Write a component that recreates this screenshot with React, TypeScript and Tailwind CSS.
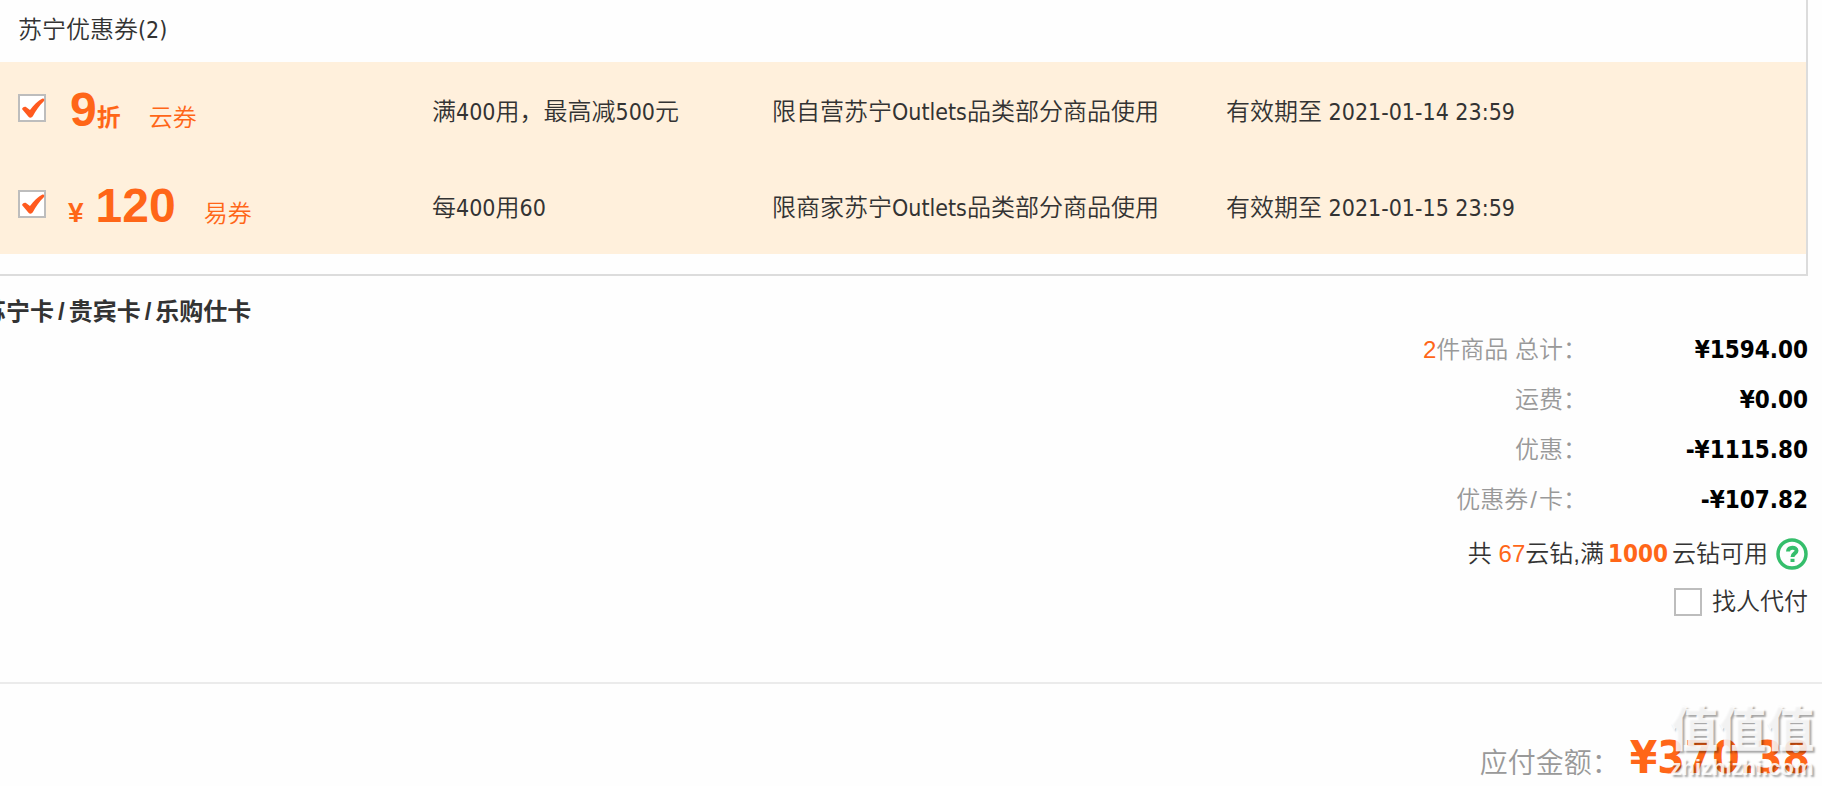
import React from 'react';

const coupons = [
  {
    id: 'yun',
    amount: '9',
    unit: '折',
    type: '云券',
    rule: '满400用，最高减500元',
    scope: '限自营苏宁Outlets品类部分商品使用',
    expires: '2021-01-14 23:59',
  },
  {
    id: 'yi',
    symbol: '¥',
    amount: '120',
    type: '易券',
    rule: '每400用60',
    scope: '限商家苏宁Outlets品类部分商品使用',
    expires: '2021-01-15 23:59',
  },
];

// Latin runs use a narrower face than the Chinese around them
function Mixed({ text }: { text: string }) {
  return (
    <>
      {text.split(/([ -~]+)/).map((part, i) =>
        i % 2 ? (
          <span key={i} className="font-['DejaVu_Sans_Condensed','Noto_Sans',sans-serif] text-[23px]">
            {part}
          </span>
        ) : (
          part
        )
      )}
    </>
  );
}

function Checkbox({ id, label, defaultChecked }: { id: string; label?: string; defaultChecked?: boolean }) {
  return (
    <span className="relative block h-7 w-7">
      <input
        id={id}
        type="checkbox"
        aria-label={label}
        defaultChecked={defaultChecked}
        className="peer block h-7 w-7 appearance-none border-2 border-[#bdbdbd] bg-white"
      />
      <svg viewBox="0 0 28 28" className="pointer-events-none absolute inset-0 hidden h-7 w-7 peer-checked:block">
        <path
          d="M4 15 C5 12.8 6.8 12.2 8.3 13.2 L12 16 C15.5 11 20 6.5 24.5 4.5 C26.3 4 26.8 5.8 25.8 7.3 C21 12 17.8 17 14.8 22.3 C13.7 24 11.7 24 10.5 22.8 Z"
          fill="#ff5a1f"
        />
      </svg>
    </span>
  );
}

function SummaryRow({ label, value }: { label: React.ReactNode; value: string }) {
  return (
    <div className="flex h-[50px] items-center justify-end">
      <dt className="font-[350] text-[#999]">{label}</dt>
      <dd className="w-[221px] text-right font-['DejaVu_Sans_Condensed','Noto_Sans',sans-serif] font-bold text-black">
        {value}
      </dd>
    </div>
  );
}

export default function App() {
  return (
    <div className="relative overflow-hidden bg-[#fefefe] font-['Liberation_Sans','Noto_Sans_CJK_SC',sans-serif] text-2xl text-[#333]">
      <section className="mr-3.5 border-r-2 border-b-2 border-[#dcdcdc] pb-5">
        <h2 className="flex h-[62px] items-center pb-0.5 pl-[18px] font-[350]">
          <span>
            <Mixed text="苏宁优惠券(2)" />
          </span>
        </h2>
        <table className="w-full table-fixed bg-[#fff0dc] text-left">
          <colgroup>
            <col className="w-[68px]" />
            <col className="w-[364px]" />
            <col className="w-[340px]" />
            <col className="w-[454px]" />
            <col />
          </colgroup>
          <tbody>
            {coupons.map((coupon) => (
              <tr key={coupon.id} className="h-24">
                <td className="pb-1 pl-[18px]">
                  <Checkbox id={coupon.id} label={coupon.type} defaultChecked />
                </td>
                <td className="whitespace-nowrap text-[#ff6618]">
                  <label htmlFor={coupon.id} className="flex items-baseline">
                    {coupon.symbol && <span className="mr-3 text-[28px] leading-8 font-bold">{coupon.symbol}</span>}
                    <strong className={coupon.symbol ? 'text-5xl' : 'ml-0.5 text-5xl'}>{coupon.amount}</strong>
                    {coupon.unit && <span className="font-bold">{coupon.unit}</span>}
                    <span className="ml-7 font-[350]">{coupon.type}</span>
                  </label>
                </td>
                <td className="pt-1 font-[350]">
                  <Mixed text={coupon.rule} />
                </td>
                <td className="pt-1 font-[350]">
                  <Mixed text={coupon.scope} />
                </td>
                <td className="pt-1 font-[350]">
                  <Mixed text={`有效期至 ${coupon.expires}`} />
                </td>
              </tr>
            ))}
          </tbody>
        </table>
      </section>

      <h3 className="-ml-[18px] mt-[18px] h-[31px] leading-9 font-bold">
        苏宁卡<span className="px-1">/</span>贵宾卡<span className="px-1">/</span>乐购仕卡
      </h3>

      <section className="pr-3.5">
        <dl>
          <SummaryRow
            label={
              <>
                <span className="text-[#ff6618]">2</span>件商品 总计：
              </>
            }
            value="¥1594.00"
          />
          <SummaryRow label="运费：" value="¥0.00" />
          <SummaryRow label="优惠：" value="-¥1115.80" />
          <SummaryRow
            label={
              <>
                优惠券<span className="px-0.5">/</span>卡：
              </>
            }
            value="-¥107.82"
          />
        </dl>

        <div className="mt-[11px] flex h-9 items-center justify-end font-[350]">
          <p>
            共 <span className="text-[#ff6618]">67</span>云钻,满
            <strong className="mx-1 font-['DejaVu_Sans_Condensed','Noto_Sans',sans-serif] font-bold text-[#ff6618]">
              1000
            </strong>
            云钻可用
          </p>
          <button type="button" aria-label="云钻说明" className="ml-2 h-8 w-8">
            <svg viewBox="0 0 32 32" className="h-8 w-8" fill="none" stroke="#35be6b">
              <circle cx="16" cy="16" r="14" strokeWidth="3.5" />
              <path d="M12 13.5 C12 8.5 20.5 8.5 20.5 12.8 C20.5 15.5 16.5 15.5 16.5 19" strokeWidth="4" />
              <path d="M16.5 20.8 V24" strokeWidth="4" />
            </svg>
          </button>
        </div>

        <div className="mt-3 flex h-9 items-center justify-end gap-2.5 font-[350]">
          <Checkbox id="pay-by-other" />
          <label htmlFor="pay-by-other">找人代付</label>
        </div>
      </section>

      <footer className="mt-[62px] flex h-[104px] items-baseline justify-end border-t-2 border-[#ebebeb] pt-11 pr-3">
        <span className="text-[28px] font-[350] text-[#999]">应付金额：</span>
        <strong className="ml-2.5 font-['DejaVu_Sans_Condensed','Noto_Sans',sans-serif] text-[44px] leading-[60px] text-[#ff6618]">
          ¥370.38
        </strong>
      </footer>

      <div className="pointer-events-none absolute right-2 bottom-1.5 flex flex-col items-center text-white/85 [text-shadow:2px_2px_2px_rgba(0,0,0,0.35)]">
        <span className="text-5xl leading-[52px] font-black">值值值</span>
        <span className="text-[22px] leading-6 font-bold">zhizhizhi.com</span>
      </div>
    </div>
  );
}
